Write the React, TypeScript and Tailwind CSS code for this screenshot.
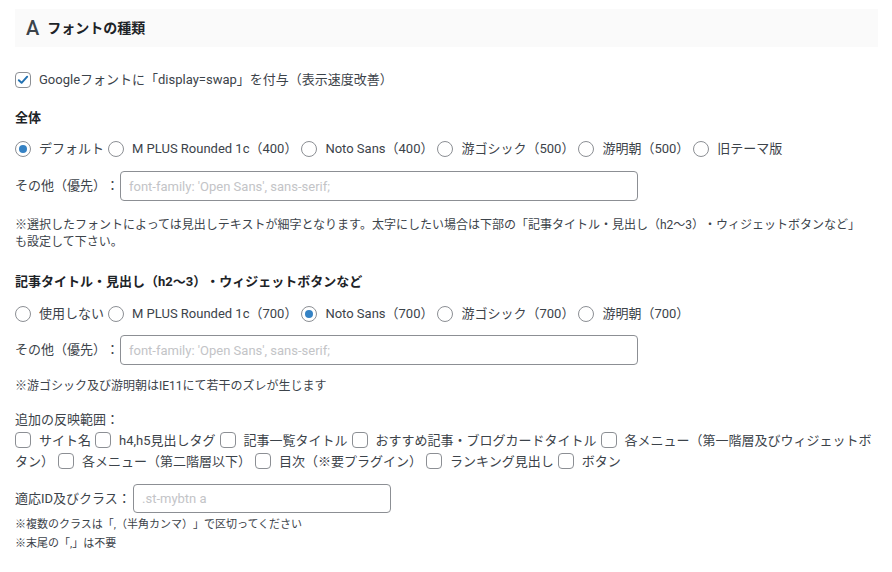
import type { ReactNode } from "react";

const font = "font-['Roboto','Noto_Sans_CJK_JP',sans-serif] [text-spacing-trim:space-all]";

function Radio({ checked, children }: { checked?: boolean; children: ReactNode }) {
	return (
		<label className="inline-flex items-center mr-[4px] align-middle">
			<span className="w-4 h-4 rounded-full border border-[#8c8f94] bg-white flex items-center justify-center shrink-0">
				{checked && <span className="w-2 h-2 rounded-full bg-[#3582c4]" />}
			</span>
			<span className="ml-2">{children}</span>
		</label>
	);
}

function Check({ checked }: { checked?: boolean }) {
	return (
		<span className="inline-flex w-4 h-4 rounded-[4px] border border-[#8c8f94] bg-white items-center justify-center align-[-3px] mr-2">
			{checked && (
				<svg viewBox="0 0 16 16" className="w-[14px] h-[14px]">
					<path
						d="M3.2 8.2 6.4 11.2 12.8 4.2"
						fill="none"
						stroke="#2271b1"
						strokeWidth="2.2"
						strokeLinecap="round"
						strokeLinejoin="round"
					/>
				</svg>
			)}
		</span>
	);
}

function TextInput({ placeholder, className }: { placeholder: string; className: string }) {
	return (
		<input
			type="text"
			placeholder={placeholder}
			className={`border border-[#8c8f94] rounded-[4px] bg-white px-2 text-[13px] text-[#3c434a] placeholder:text-[#c3c4c7] outline-none ${className}`}
		/>
	);
}

const scopes = [
	"サイト名",
	"h4,h5見出しタグ",
	"記事一覧タイトル",
	"おすすめ記事・ブログカードタイトル",
	"各メニュー（第一階層及びウィジェットボタン）",
	"各メニュー（第二階層以下）",
	"目次（※要プラグイン）",
	"ランキング見出し",
	"ボタン",
];

export default function App() {
	return (
		<div className={`${font} bg-white min-h-[572px] pl-[15px] pr-[14px] pt-[9px] text-[13px] text-[#3c434a]`}>
			{/* section header */}
			<div className="h-[38px] bg-[#fafafa] flex items-center pl-[11px]">
				<span className="text-[20px] leading-none font-medium text-[#3c434a] mr-[8px]">A</span>
				<span className="text-[14px] font-bold text-[#1d2327]">フォントの種類</span>
			</div>

			<div className="mt-[22px] h-[21px] leading-[21px]">
				<Check checked />
				Googleフォントに「display=swap」を付与（表示速度改善）
			</div>

			<div className="mt-[17px] h-[21px] leading-[21px] font-bold text-[#1d2327]">全体</div>

			<div className="mt-[10px] h-[21px] flex items-center">
				<Radio checked>デフォルト</Radio>
				<Radio>M PLUS Rounded 1c（400）</Radio>
				<Radio>Noto Sans（400）</Radio>
				<Radio>游ゴシック（500）</Radio>
				<Radio>游明朝（500）</Radio>
				<Radio>旧テーマ版</Radio>
			</div>

			<div className="mt-[12px] flex items-center">
				<span className="w-[105px] shrink-0">その他（優先）：</span>
				<TextInput placeholder="font-family: 'Open Sans', sans-serif;" className="w-[518px] h-[30px]" />
			</div>

			<p className="mt-[16px] text-[12px] leading-[17px]">
				※選択したフォントによっては見出しテキストが細字となります。太字にしたい場合は下部の「記事タイトル・見出し（h2～3）・ウィジェットボタンなど」
				<br />
				も設定して下さい。
			</p>

			<div className="mt-[20px] h-[21px] leading-[21px] font-bold text-[#1d2327]">
				記事タイトル・見出し（h2～3）・ウィジェットボタンなど
			</div>

			<div className="mt-[11px] h-[21px] flex items-center">
				<Radio>使用しない</Radio>
				<Radio>M PLUS Rounded 1c（700）</Radio>
				<Radio checked>Noto Sans（700）</Radio>
				<Radio>游ゴシック（700）</Radio>
				<Radio>游明朝（700）</Radio>
			</div>

			<div className="mt-[11px] flex items-center">
				<span className="w-[105px] shrink-0">その他（優先）：</span>
				<TextInput placeholder="font-family: 'Open Sans', sans-serif;" className="w-[518px] h-[30px]" />
			</div>

			<p className="mt-[13px] text-[12px] leading-[17px]">※游ゴシック及び游明朝はIE11にて若干のズレが生じます</p>

			<div className="mt-[14px] leading-[21px]">追加の反映範囲：</div>
			<div className="leading-[21px]">
				{scopes.map((s) => (
					<span key={s}>
						<Check />
						<span className="mr-[4px]">{s}</span>
					</span>
				))}
			</div>

			<div className="mt-[12px] flex items-center">
				<span className="w-[118px] shrink-0">適応ID及びクラス：</span>
				<TextInput placeholder=".st-mybtn a" className="w-[258px] h-[29px]" />
			</div>

			<p className="mt-[2px] text-[11px] leading-[19px]">※複数のクラスは「,（半角カンマ）」で区切ってください</p>
			<p className="text-[11px] leading-[19px]">※末尾の「,」は不要</p>
		</div>
	);
}
